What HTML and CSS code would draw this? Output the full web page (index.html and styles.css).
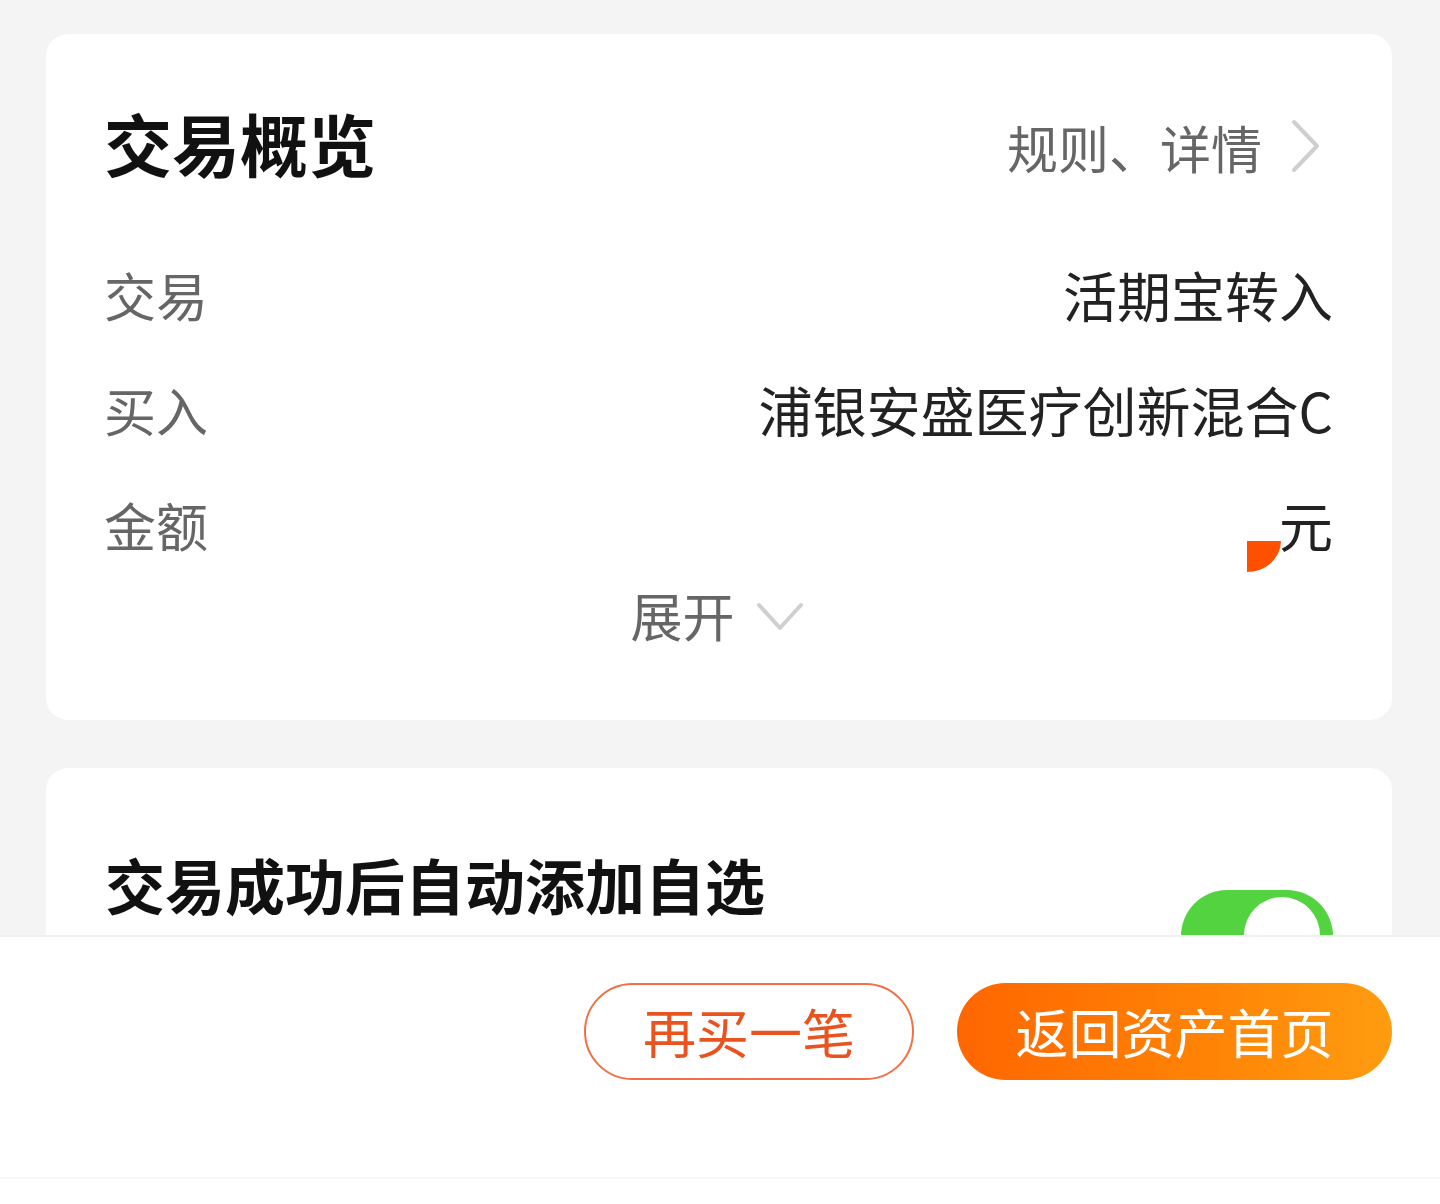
FILE: index.html
```html
<!DOCTYPE html>
<html lang="zh-CN">
<head>
<meta charset="utf-8">
<title>交易概览</title>
<link rel="stylesheet" href="styles.css">
</head>
<body>
<div class="page">
  <section class="card overview">
    <div class="head">
      <h1 class="title">交易概览</h1>
      <a class="rules">规则、详情<svg class="chev-right" width="32" height="56" viewBox="0 0 32 56"><path d="M4 4 L27 28 L4 52" fill="none" stroke="#cfcfcf" stroke-width="4" stroke-linecap="round" stroke-linejoin="round"/></svg></a>
    </div>
    <div class="row">
      <span class="label">交易</span>
      <span class="value">活期宝转入</span>
    </div>
    <div class="row">
      <span class="label">买入</span>
      <span class="value">浦银安盛医疗创新混合C</span>
    </div>
    <div class="row">
      <span class="label">金额</span>
      <span class="value amount"><span class="amount-mark"></span>元</span>
    </div>
    <div class="expand">展开<svg class="chev-down" width="50" height="34" viewBox="0 0 50 34"><path d="M4 5 L25 28 L46 5" fill="none" stroke="#cfcfcf" stroke-width="4" stroke-linecap="round" stroke-linejoin="round"/></svg></div>
  </section>

  <section class="card auto">
    <div class="auto-text">
      <h2 class="auto-title">交易成功后自动添加自选</h2>
    </div>
    <div class="toggle"><span class="knob"></span></div>
  </section>
</div>

<footer class="bar">
  <div class="actions">
    <button class="btn btn-outline">再买一笔</button>
    <button class="btn btn-fill">返回资产首页</button>
  </div>
  <div class="safe"></div>
</footer>
</body>
</html>
```

FILE: styles.css
```css
* { box-sizing: border-box; }
html, body {
  margin: 0;
  padding: 0;
}
body {
  width: 1440px;
  height: 1204px;
  overflow: hidden;
  background: #f4f4f4;
  font-family: "Noto Sans CJK SC", "Noto Sans", sans-serif;
  color: #222;
}
.page {
  padding: 34px 48px 0 46px;
  display: flex;
  flex-direction: column;
  gap: 48px;
}
.card {
  background: #fff;
  border-radius: 22px;
}
.overview {
  height: 686px;
  padding: 75px 59px 0 58px;
  display: flex;
  flex-direction: column;
}
.head {
  display: flex;
  justify-content: space-between;
  align-items: flex-start;
}
.title {
  margin: 0;
  font-size: 68px;
  line-height: 68px;
  font-weight: 700;
  color: #111;
}
.rules {
  display: flex;
  align-items: center;
  font-size: 51px;
  line-height: 52px;
  color: #666;
  margin-top: 11px;
  margin-right: 11px;
}
.chev-right {
  margin-left: 28px;
  margin-top: -2px;
}
.row {
  display: flex;
  justify-content: space-between;
  height: 53px;
  margin-top: 62px;
}
.head + .row { margin-top: 91px; }
.label {
  font-size: 52px;
  line-height: 53px;
  color: #666;
}
.value {
  font-size: 54px;
  line-height: 53px;
  color: #222;
}
.amount {
  display: flex;
  align-items: flex-start;
}
.amount-mark {
  width: 34px;
  height: 31px;
  margin-top: 43px;
  margin-right: -2px;
  background: #ff5000;
  border-bottom-right-radius: 100% 100%;
}
.expand {
  margin-top: 37px;
  display: flex;
  justify-content: center;
  align-items: center;
  font-size: 52px;
  line-height: 53px;
  color: #666;
  padding-right: 2px;
}
.chev-down {
  margin-left: 20px;
  margin-top: 4px;
}
.auto {
  height: 320px;
  padding: 86px 59px 0 59px;
  display: flex;
  justify-content: space-between;
  align-items: flex-start;
}
.auto-title {
  margin: 0;
  font-size: 60px;
  line-height: 60px;
  font-weight: 700;
  color: #111;
}
.toggle {
  margin-top: 36px;
  width: 152px;
  height: 92px;
  border-radius: 46px;
  background: #52d33f;
  display: flex;
  justify-content: flex-end;
  padding: 7px 13px 0 0;
}
.knob {
  width: 76px;
  height: 76px;
  border-radius: 50%;
  background: #fff;
}
.bar {
  position: fixed;
  left: 0;
  right: 0;
  top: 935px;
  bottom: 0;
  background: #fff;
  border-top: 2px solid #efefef;
  display: flex;
  flex-direction: column;
}
.actions {
  display: flex;
  justify-content: flex-end;
  gap: 43px;
  padding: 46px 48px 0 0;
  height: 240px;
}
.btn {
  height: 97px;
  border-radius: 49px;
  font-family: "Noto Sans CJK SC", "Noto Sans", sans-serif;
  font-size: 53px;
  line-height: 53px;
  padding: 0;
  cursor: pointer;
}
.btn-outline {
  width: 330px;
  background: #fff;
  border: 2px solid #f07048;
  color: #e9531f;
}
.btn-fill {
  width: 435px;
  border: 0;
  color: #fff;
  background: linear-gradient(90deg, #ff6600 0%, #ff8205 55%, #ff9c10 100%);
}
.safe {
  border-top: 2px solid #f9f9f9;
  flex: 1;
}
```
